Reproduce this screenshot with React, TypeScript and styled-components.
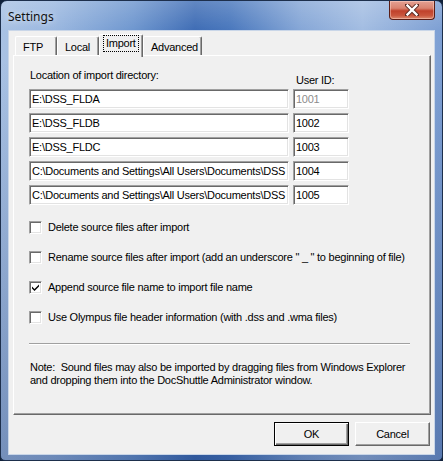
import React from 'react';
import styled, { createGlobalStyle } from 'styled-components';

const Global = createGlobalStyle`
  html, body { margin: 0; padding: 0; background: #10213a; }
  body { width: 443px; height: 461px; overflow: hidden; }
`;

const Window = styled.div`
  box-sizing: border-box;
  width: 443px;
  height: 461px;
  border: 1px solid #1d2f4c;
  border-radius: 7px 7px 5px 5px;
  background:
    linear-gradient(180deg, rgba(255,255,255,0.18) 0px, rgba(255,255,255,0) 29px, rgba(0,0,0,0) 60px, rgba(20,50,110,0.35) 100%),
    linear-gradient(90deg, #a9c2e4 0%, #9bb8e0 12%, #6f97cf 30%, #3f6db5 44%, #4a78bd 52%, #86a7d7 68%, #a3bde2 82%, #7d9fd3 100%);
  display: flex;
  flex-direction: column;
  padding: 0 7px 5px;
  font-family: "Liberation Sans", Arial, sans-serif;
  font-size: 11px;
  letter-spacing: -0.25px;
  color: #000;
`;

const TitleBar = styled.div`
  height: 29px;
  display: flex;
  align-items: flex-start;
  flex: none;
`;

const Title = styled.div`
  font-family: "Noto Sans", "Open Sans", sans-serif;
  font-size: 12px;
  letter-spacing: 0;
  color: #111;
  margin-top: 7px;
  text-shadow: 0 0 6px rgba(255,255,255,0.8);
`;

const CloseButton = styled.div`
  margin-left: auto;
  width: 46px;
  height: 19px;
  box-sizing: border-box;
  border: 1px solid #5a1d15;
  border-top: none;
  border-radius: 0 0 4px 4px;
  background: linear-gradient(180deg, #e4a193 0%, #d9826f 40%, #c0412b 55%, #c9553c 80%, #dc8a6e 100%);
  box-shadow: inset 0 0 0 1px rgba(255,220,210,0.45);
  display: flex;
  align-items: center;
  justify-content: center;
`;

const Client = styled.div`
  flex: 1;
  box-sizing: border-box;
  background: #f0f0f0;
  border: 1px solid #c9d6e8;
  display: flex;
  flex-direction: column;
`;

const TabStrip = styled.div`
  display: flex;
  align-items: flex-end;
  height: 21px;
  margin-top: 3px;
  padding-left: 6px;
  position: relative;
  z-index: 1;
`;

const Tab = styled.div<{ $w: number; $active?: boolean }>`
  box-sizing: border-box;
  width: ${(p) => p.$w}px;
  height: ${(p) => (p.$active ? 23 : 19)}px;
  margin-bottom: ${(p) => (p.$active ? -2 : 0)}px;
  background: #f0f0f0;
  border-top: 1px solid #fff;
  border-left: 1px solid #fff;
  border-right: 1px solid #696969;
  box-shadow: inset -1px 0 0 #a0a0a0;
  border-radius: 2px 2px 0 0;
  padding: ${(p) => (p.$active ? '1px 0 0 4px' : '3px 0 0 5px')};
`;

const TabLabel = styled.span<{ $focus?: boolean }>`
  display: inline-block;
  line-height: 13px;
  padding: 1px 2px;
  outline: ${(p) => (p.$focus ? '1px dotted #000' : 'none')};
  outline-offset: 0;
`;

const Panel = styled.div`
  box-sizing: border-box;
  width: 418px;
  height: 360px;
  margin-left: 4px;
  background: #f0f0f0;
  border-top: 1px solid #fff;
  border-left: 1px solid #fff;
  border-right: 1px solid #696969;
  border-bottom: 1px solid #696969;
  box-shadow: inset -1px -1px 0 #a0a0a0;
  padding: 13px 0 0 15px;
  display: flex;
  flex-direction: column;
`;

const HeaderRow = styled.div`
  display: grid;
  grid-template-columns: 260px 56px;
  column-gap: 4px;
  height: 18px;
  margin-bottom: 2px;
  line-height: 13px;
`;

const HeaderLabel = styled.div<{ $low?: boolean }>`
  align-self: ${(p) => (p.$low ? 'end' : 'start')};
  padding-left: ${(p) => (p.$low ? 3 : 1)}px;
`;

const FieldGrid = styled.div`
  display: grid;
  grid-template-columns: 260px 56px;
  column-gap: 4px;
  row-gap: 4px;
  grid-auto-rows: 20px;
`;

const Field = styled.div<{ $disabled?: boolean }>`
  box-sizing: border-box;
  height: 20px;
  background: #fff;
  border-top: 1px solid #a0a0a0;
  border-left: 1px solid #a0a0a0;
  border-right: 1px solid #fff;
  border-bottom: 1px solid #fff;
  box-shadow: inset 1px 1px 0 #696969, inset -1px -1px 0 #e3e3e3;
  padding: 0 0 0 2px;
  line-height: 18px;
  white-space: nowrap;
  overflow: hidden;
  color: ${(p) => (p.$disabled ? '#8c8c8c' : '#000')};
`;

const Options = styled.div`
  display: flex;
  flex-direction: column;
  gap: 14px;
  margin-top: 14px;
`;

const OptionRow = styled.div`
  display: flex;
  align-items: center;
  height: 16px;
  gap: 6px;
  line-height: 13px;
`;

const Box = styled.div`
  box-sizing: border-box;
  width: 13px;
  height: 13px;
  flex: none;
  background: #fff;
  border-top: 1px solid #a0a0a0;
  border-left: 1px solid #a0a0a0;
  border-right: 1px solid #fff;
  border-bottom: 1px solid #fff;
  box-shadow: inset 1px 1px 0 #696969, inset -1px -1px 0 #e3e3e3;
  display: flex;
  align-items: center;
  justify-content: center;
`;

const Separator = styled.div`
  width: 381px;
  height: 1px;
  background: #a0a0a0;
  border-bottom: 1px solid #fff;
  margin-top: 18px;
`;

const Note = styled.div`
  margin-top: 16px;
  line-height: 13px;
  padding-left: 1px;
`;

const ButtonRow = styled.div`
  display: flex;
  justify-content: flex-end;
  gap: 6px;
  margin-top: 7px;
  padding-right: 4px;
`;

const Button = styled.div<{ $default?: boolean }>`
  box-sizing: border-box;
  width: 75px;
  height: 24px;
  background: #f0f0f0;
  display: flex;
  align-items: center;
  justify-content: center;
  line-height: 13px;
  ${(p) =>
    p.$default
      ? `border: 1px solid #000;
         box-shadow: inset 1px 1px 0 #fff, inset -1px -1px 0 #696969, inset -2px -2px 0 #a0a0a0;`
      : `border-top: 1px solid #fff; border-left: 1px solid #fff;
         border-right: 1px solid #696969; border-bottom: 1px solid #696969;
         box-shadow: inset -1px -1px 0 #a0a0a0;`}
`;

const paths = [
  'E:\\DSS_FLDA',
  'E:\\DSS_FLDB',
  'E:\\DSS_FLDC',
  'C:\\Documents and Settings\\All Users\\Documents\\DSS',
  'C:\\Documents and Settings\\All Users\\Documents\\DSS',
];
const ids = ['1001', '1002', '1003', '1004', '1005'];

const options = [
  { label: 'Delete source files after import', checked: false },
  { label: 'Rename source files after import (add an underscore " _ " to beginning of file)', checked: false },
  { label: 'Append source file name to import file name', checked: true },
  { label: 'Use Olympus file header information (with .dss and .wma files)', checked: false },
];

export default function App() {
  return (
    <>
      <Global />
      <Window>
        <TitleBar>
          <Title>Settings</Title>
          <CloseButton>
            <svg width="14" height="12" viewBox="0 0 14 12">
              <path d="M2 1 L12 11 M12 1 L2 11" stroke="#5a2a22" strokeWidth="4.2" strokeLinecap="square" />
              <path d="M2.5 1.5 L11.5 10.5 M11.5 1.5 L2.5 10.5" stroke="#fff" strokeWidth="2.4" strokeLinecap="square" />
            </svg>
          </CloseButton>
        </TitleBar>
        <Client>
          <TabStrip>
            <Tab $w={42}><TabLabel>FTP</TabLabel></Tab>
            <Tab $w={42}><TabLabel>Local</TabLabel></Tab>
            <Tab $w={44} $active><TabLabel $focus>Import</TabLabel></Tab>
            <Tab $w={59}><TabLabel>Advanced</TabLabel></Tab>
          </TabStrip>
          <Panel>
            <HeaderRow>
              <HeaderLabel>Location of import directory:</HeaderLabel>
              <HeaderLabel $low>User ID:</HeaderLabel>
            </HeaderRow>
            <FieldGrid>
              {paths.map((p, i) => (
                <React.Fragment key={i}>
                  <Field>{p}</Field>
                  <Field $disabled={i === 0}>{ids[i]}</Field>
                </React.Fragment>
              ))}
            </FieldGrid>
            <Options>
              {options.map((o) => (
                <OptionRow key={o.label}>
                  <Box>
                    {o.checked && (
                      <svg width="9" height="9" viewBox="0 0 9 9">
                        <path d="M1 3.5 L3.5 6 L8 1.5 L8 3.5 L3.5 8 L1 5.5 Z" fill="#000" />
                      </svg>
                    )}
                  </Box>
                  <span>{o.label}</span>
                </OptionRow>
              ))}
            </Options>
            <Separator />
            <Note>
              Note:&nbsp; Sound files may also be imported by dragging files from Windows Explorer
              <br />
              and dropping them into the DocShuttle Administrator window.
            </Note>
          </Panel>
          <ButtonRow>
            <Button $default>OK</Button>
            <Button>Cancel</Button>
          </ButtonRow>
        </Client>
      </Window>
    </>
  );
}
